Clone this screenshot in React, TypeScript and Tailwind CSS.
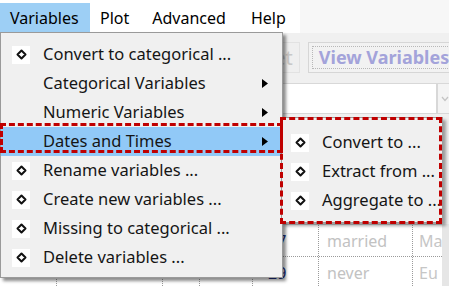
import React from 'react';

const font = { fontFamily: '"Noto Sans", "Open Sans", sans-serif' };

const Diamond: React.FC = () => (
  <div className="w-[18px] h-[18px] bg-white flex items-center justify-center">
    <svg width="11" height="11" viewBox="0 0 11 11">
      <path d="M5.5 1.5 L9.5 5.5 L5.5 9.5 L1.5 5.5 Z" fill="none" stroke="#111" strokeWidth="2" strokeLinejoin="round" />
    </svg>
  </div>
);

const Arrow: React.FC = () => (
  <svg width="6" height="9" viewBox="0 0 6 9">
    <path d="M0 0 L6 4.5 L0 9 Z" fill="#000" />
  </svg>
);

type Item = { label: string; icon?: boolean; sub?: boolean; active?: boolean };

const items: Item[] = [
  { label: 'Convert to categorical ...', icon: true },
  { label: 'Categorical Variables', sub: true },
  { label: 'Numeric Variables', sub: true },
  { label: 'Dates and Times', sub: true, active: true },
  { label: 'Rename variables ...', icon: true },
  { label: 'Create new variables ...', icon: true },
  { label: 'Missing to categorical ...', icon: true },
  { label: 'Delete variables ...', icon: true },
];

const subItems = ['Convert to ...', 'Extract from ...', 'Aggregate to ...'];

const MenuRow: React.FC<{ item: Item }> = ({ item }) => (
  <div className={`relative h-[29px] flex items-center ${item.active ? 'bg-[#91c9f7]' : ''}`}>
    <div className="w-[42px] pl-[11px] flex items-center">{item.icon && <Diamond />}</div>
    <span className="flex-1 text-[16.5px] text-[#151515] whitespace-nowrap">{item.label}</span>
    {item.sub && (
      <div className="w-[20px] flex items-center">
        <Arrow />
      </div>
    )}
  </div>
);

const App: React.FC = () => {
  return (
    <div className="relative w-[449px] h-[286px] overflow-hidden bg-[#f0f0f0]" style={font}>
      {/* menu bar */}
      <div className="h-[33px] flex bg-[#f7f7f7]">
        <div className="w-[300px] flex items-end bg-white text-[16px] text-black">
          <div className="w-[90px] h-[29px] mb-[1px] pl-[10px] flex items-center bg-[#9dcff5]">Variables</div>
          <div className="h-[29px] mb-[1px] ml-[10px] flex items-center">Plot</div>
          <div className="h-[29px] mb-[1px] ml-[23px] flex items-center">Advanced</div>
          <div className="h-[29px] mb-[1px] ml-[25px] flex items-center">Help</div>
        </div>
      </div>

      {/* toolbar */}
      <div className="flex gap-[8px] pt-[9px] pl-[240px]">
        <div className="w-[72px] h-[31px] border border-[#e2e2e2] bg-[#efefef] flex items-center justify-end pr-[6px] text-[20px] text-[#c8c8c8]">
          Reset
        </div>
        <div className="w-[170px] h-[31px] border border-[#d6d6d6] bg-[#f2f2f2] p-[3px] shrink-0">
          <div className="h-full border border-dotted border-[#b8b8b8] flex items-center pl-[6px] text-[18px] font-bold text-[#a3a3da] whitespace-nowrap">
            View Variables
          </div>
        </div>
      </div>

      {/* combobox */}
      <div className="flex mt-[10px] pl-[200px] pr-0">
        <div className="w-[237px] h-[31px] bg-white border border-[#d8d8d8]" />
        <div className="w-[12px] h-[31px] bg-[#f4f4f4] border-y border-l border-[#d8d8d8] flex items-center justify-end">
          <svg width="8" height="6" viewBox="0 0 8 6">
            <path d="M1 1 L4 4.5 L7 1" fill="none" stroke="#c4c4c4" strokeWidth="1.2" />
          </svg>
        </div>
      </div>

      {/* data grid */}
      <div className="mt-[110px] flex">
        <div className="w-[442px] bg-white border-t border-[#d0d0d0]">
          {[
            ['27', 'married', 'Ma'],
            ['29', 'never', 'Eu'],
          ].map((r, i) => (
            <div key={i} className="h-[32px] flex border-b border-dotted border-[#9a9a9a] text-[16px]">
              <div className="w-[57px] border-r border-dotted border-[#9a9a9a]" />
              <div className="w-[106px] border-r border-dotted border-[#9a9a9a]" />
              <div className="w-[37px] border-r border-dotted border-[#9a9a9a]" />
              <div className="w-[53px] border-r border-dotted border-[#9a9a9a]" />
              <div className="w-[66px] border-r border-dotted border-[#9a9a9a] flex items-center pl-[15px] text-[#1d2d80]">{r[0]}</div>
              <div className="w-[94px] border-r border-dotted border-[#9a9a9a] flex items-center pl-[8px] text-[#c2c2c2]">{r[1]}</div>
              <div className="flex-1 flex items-center pl-[6px] text-[#c6c6c6] overflow-hidden">{r[2]}</div>
            </div>
          ))}
        </div>
        <div className="flex-1 bg-[#e6e6e6]" />
      </div>

      {/* Variables dropdown */}
      <div className="absolute left-0 top-[32px] w-[283px] bg-[#f0f0f0] border border-[#9a9a9a] pt-[7px] pb-[5px] shadow-[3px_3px_3px_rgba(0,0,0,0.45)]">
        {items.map((it) => (
          <MenuRow key={it.label} item={it} />
        ))}
      </div>

      {/* Dates and Times submenu */}
      <div className="absolute left-[281px] top-[117px] w-[162px] h-[106px] bg-[#f0f0f0] border border-[#9a9a9a] pt-[10px] shadow-[3px_3px_3px_rgba(0,0,0,0.35)]">
        {subItems.map((s) => (
          <div key={s} className="h-[29px] flex items-center">
            <div className="w-[40px] pl-[9px] flex items-center">
              <Diamond />
            </div>
            <span className="text-[16.5px] text-[#151515] whitespace-nowrap">{s}</span>
          </div>
        ))}
      </div>

      {/* red dashed highlights */}
      <div className="absolute left-0 top-[123px] w-[283px] h-[30px] border-[3px] border-dashed border-[#c00000]" />
      <div className="absolute left-[280px] top-[117px] w-[162px] h-[107px] border-[3px] border-dashed border-[#c00000]" />
    </div>
  );
};

export default App;
